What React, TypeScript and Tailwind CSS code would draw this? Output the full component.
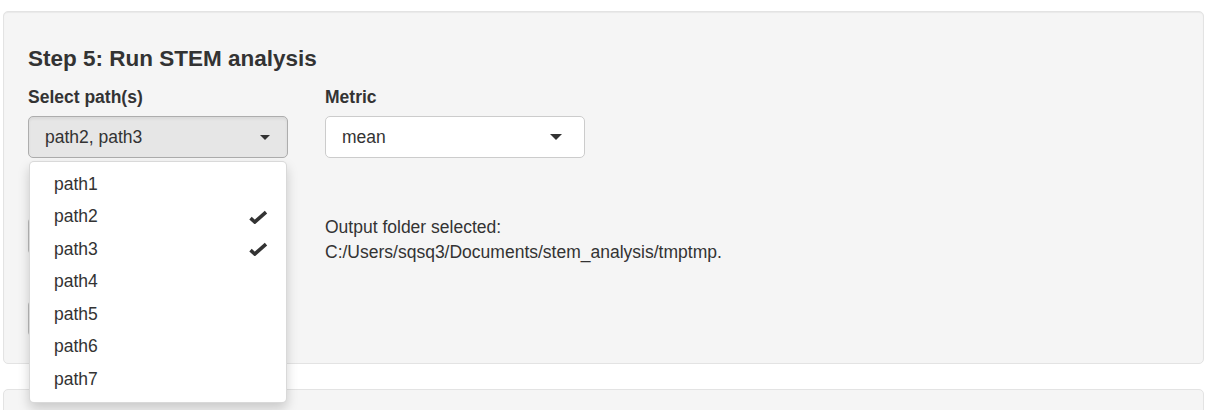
import React from 'react';

const paths = ['path1', 'path2', 'path3', 'path4', 'path5', 'path6', 'path7'];
const picked = ['path2', 'path3'];

function Caret({ w, h }: { w: number; h: number }) {
    return (
        <svg width={w} height={h} viewBox={`0 0 ${w} ${h}`} className="block">
            <polygon points={`0,0 ${w},0 ${w / 2},${h}`} fill="#333" />
        </svg>
    );
}

function Check() {
    return (
        <svg width="19" height="14" viewBox="0 0 19 14" className="block">
            <path d="M1.5 8.2 L5.8 12 L17 2.2" fill="none" stroke="#333" strokeWidth="3.6" strokeLinejoin="miter" />
        </svg>
    );
}

export default function App() {
    return (
        <div className="min-h-[410px] bg-white pt-[11px] pl-[3px] text-[17.5px] text-[#333] font-['Liberation_Sans',Arial,sans-serif] leading-[25px] overflow-hidden">
            <div className="w-[1201px] h-[353px] rounded-[5px] border border-[#e3e3e3] bg-[#f5f5f5] shadow-[inset_0_1px_1px_rgba(0,0,0,0.05)] px-[24px] pt-[34px]">
                <h4 className="text-[22.5px] font-bold leading-[25px] m-0">Step 5: Run STEM analysis</h4>

                <div className="flex mt-[14px]">
                    {/* path picker column */}
                    <div className="w-[260px] relative">
                        <div className="font-bold leading-[25px] mb-[6px]">Select path(s)</div>
                        <div className="h-[42px] rounded-[5px] border border-[#adadad] bg-[#e6e6e6] shadow-[inset_0_2px_3px_rgba(0,0,0,0.06)] flex items-center justify-between pl-[16px] pr-[17px]">
                            <span>path2, path3</span>
                            <Caret w={10} h={5} />
                        </div>

                        <div className="mt-[59px] h-[38px] w-[210px] rounded-[5px] border border-[#bbb] bg-white" />
                        <div className="mt-[45px] h-[37px] w-[120px] rounded-[5px] border border-[#bbb] bg-white" />

                        {/* open menu */}
                        <div className="absolute left-[1px] top-[76px] w-[258px] rounded-[5px] border border-[rgba(0,0,0,0.15)] bg-white py-[6px] shadow-[0_6px_12px_rgba(0,0,0,0.175)] z-10">
                            {paths.map((p) => (
                                <div key={p} className="h-[32.5px] flex items-center justify-between pl-[24px] pr-[18px]">
                                    <span>{p}</span>
                                    {picked.includes(p) && <Check />}
                                </div>
                            ))}
                        </div>
                    </div>

                    {/* metric column */}
                    <div className="ml-[37px] w-[260px]">
                        <div className="font-bold leading-[25px] mb-[6px]">Metric</div>
                        <div className="h-[42px] rounded-[5px] border border-[#ccc] bg-white flex items-center justify-between pl-[16px] pr-[22px]">
                            <span>mean</span>
                            <Caret w={12} h={6} />
                        </div>
                        <div className="mt-[57px] whitespace-nowrap">
                            <div>Output folder selected:</div>
                            <div>C:/Users/sqsq3/Documents/stem_analysis/tmptmp.</div>
                        </div>
                    </div>
                </div>
            </div>

            <div className="mt-[25px] w-[1201px] h-[40px] rounded-[5px] border border-[#e3e3e3] bg-[#f5f5f5]" />
        </div>
    );
}
